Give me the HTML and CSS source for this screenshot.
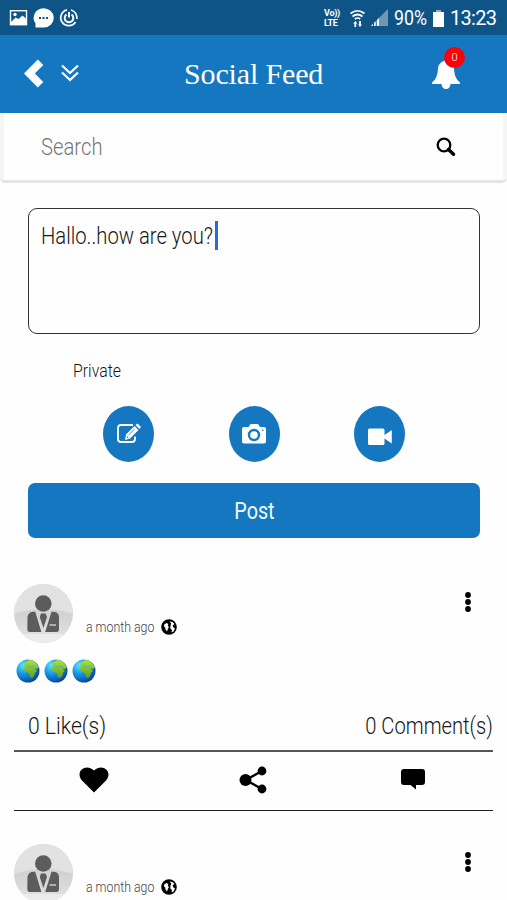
FILE: index.html
```html
<!DOCTYPE html>
<html lang="en">
<head>
<meta charset="utf-8">
<meta name="viewport" content="width=device-width">
<title>Social Feed</title>
<link rel="stylesheet" href="styles.css">
</head>
<body>
<svg class="defs" width="0" height="0" aria-hidden="true">
  <defs>
    <linearGradient id="disc" x1="0" y1="0" x2="0" y2="1"><stop offset="0" stop-color="#d6d6d6"/><stop offset=".5" stop-color="#d2d2d2"/><stop offset="1" stop-color="#e4e4e4"/></linearGradient>
    <radialGradient id="sea" cx=".3" cy=".25" r=".85"><stop offset="0" stop-color="#5de4fa"/><stop offset=".45" stop-color="#1596e4"/><stop offset="1" stop-color="#053a9b"/></radialGradient>
    <linearGradient id="land" x1="0" y1="0" x2="0" y2="1"><stop offset="0" stop-color="#b5e32c"/><stop offset="1" stop-color="#5b9a25"/></linearGradient>
  </defs>
  <symbol id="avatar" viewBox="0 0 59 59">
    <circle cx="29.500" cy="29.500" r="29.500" fill="url(#disc)"/>
    <path d="M0 30A29.500 29.500 0 0 1 59 30Q30 20 0 30Z" fill="#e2e2e2"/>
    <path d="M8 50H51Q43 59 29.500 59T8 50Z" fill="#ececec"/>
    <circle cx="29.300" cy="19.500" r="8.300" fill="#5c5c5c"/>
    <path d="M13.500 33Q14 28.500 19 27.800H21.200L27.400 48H16Q13.300 48 13.300 45ZM37.500 27.800H40Q45 28.500 45 33V45Q45 48 42.500 48H31.200ZM27 29.500H31.500L33 33L29.400 44L25.800 33Z" fill="#5c5c5c"/>
    <path d="M35.500 41H42" stroke="#e8e8e8" stroke-width="1.200"/>
  </symbol>
  <symbol id="globe" viewBox="0 0 16 16">
    <circle cx="8" cy="8" r="7.800"/>
    <path d="M3.200 5.500L5.500 4L7.300 5L6.800 6.800L8 8.200L7 9.500L6 12.500L4.500 10.500L4.300 8.500L3 7.500ZM8.500 2.500L11.500 3L13.500 5L11.500 6.500L12.500 8.500L14 9.500L12.500 12.500L10.500 13.500L11 11L9.300 9.500L9.500 6.500L10.300 4.500Z" fill="#fff"/>
  </symbol>
  <symbol id="earth" viewBox="0 0 24 24">
    <circle cx="12" cy="12" r="11.500" fill="url(#sea)"/>
    <path d="M8 5Q9.500 2.800 12 2L13.500 .8Q20 2 22.800 8.500L21 10L18.500 9L20.800 12L18.800 14L18.300 17L15.800 19.300L13.700 18L13 14L9 12.700L7.700 9.500L10 7.500Z" fill="url(#land)"/>
    <path d="M11 6.500Q14 8 18 6.800L19.500 8Q15 9 11 7.600Z" fill="#48b7c0"/>
  </symbol>
</svg>
<div class="phone">
  <div class="status">
    <svg class="notices" width="72" height="24" viewBox="0 0 72 24" fill="none" stroke="#fff">
      <rect x="2.500" y="4.700" width="16" height="14" stroke-width="1.400"/>
      <path d="M3 16L7.500 11.500L10.500 13L14.500 9.500L18.500 13V18.500H3Z" fill="#fff" stroke="none"/><circle cx="7" cy="8.500" r="1.700" fill="#fff" stroke="none"/>
      <path d="M35.200 2.200A9.700 9.200 0 1 1 36 21.500H27.500V17.500A9.700 9.700 0 0 1 35.200 2.200Z" fill="#fff" stroke="none"/>
      <path d="M31 12H33M34.500 12H36.500M38 12H40" stroke="#0e5487" stroke-width="1.800"/>
      <path d="M59 3.900A8 8 0 1 0 67.500 16M63 4A8 8 0 0 1 68.800 13" stroke-width="1.700"/>
      <path d="M58.500 8.500A4.300 4.300 0 1 0 63.500 8.500M61 6V11.500" stroke-width="2"/>
    </svg>
    <div class="signals">
      <div class="volte"><span>Vo))</span><span>LTE</span></div>
      <svg class="wifi" width="17" height="19" viewBox="0 0 17 19" fill="none" stroke="#fff" stroke-width="1.700"><path d="M1.500 4.500Q8.500 -1 15.500 4.500M3.500 7.500Q8.500 3.500 13.500 7.500M5.800 10Q8.500 8 11.200 10"/><path d="M4.200 14.500L6.300 12L8.400 14.500H7.200V18H5.400V14.500ZM9 15.500H10.100V12H11.900V15.500H13L11 18Z" fill="#fff" stroke="none"/></svg>
      <svg class="cell" width="17" height="17" viewBox="0 0 17 17"><path d="M0 17L17 0V17Z" fill="#6d98b7"/><path d="M0 17L8 9V17Z" fill="#fff"/><path d="M2.500 13V17M5.200 10V17" stroke="#0e5487" stroke-width="1"/></svg>
      <span class="percent">90%</span>
      <svg class="battery" width="11" height="17" viewBox="0 0 11 17"><path d="M3 0H8V2H3Z" fill="#8fb0c8"/><path d="M0 2H11V17H0Z" fill="#fff"/></svg>
      <span class="clock">13:23</span>
    </div>
  </div>
  <header class="header">
    <div class="nav">
      <svg width="20" height="29" viewBox="0 0 20 29"><path d="M13.800 .5L19.300 6L10.800 14.500L19.300 23L13.800 28.500L0 14.500Z" fill="#fff"/></svg>
      <svg width="18" height="18" viewBox="0 0 18 18" fill="none" stroke="#fff" stroke-width="2.200"><path d="M1 1.500L9 9L17 1.500M1 8.500L9 16L17 8.500"/></svg>
    </div>
    <h1>Social Feed</h1>
    <div class="bell">
      <svg width="30" height="31" viewBox="0 0 30 31"><path d="M13 2Q15 -.5 17 2Q22.500 3.500 23 9.500C23.500 17 25 20 29 23.500V25H19.500Q19 30 15 30T10.500 25H1V23.500C5 20 6.500 17 7 9.500Q7.500 3.500 13 2Z" fill="#fff"/></svg>
      <span class="badge">0</span>
    </div>
  </header>
  <div class="search">
    <div class="search-inner"><span class="narrow">Search</span>
      <svg width="20" height="20" viewBox="0 0 20 20" fill="none" stroke="#000"><circle cx="8" cy="8" r="6.300" stroke-width="2.300"/><path d="M12.500 12.500L17.500 17.200" stroke-width="3.500" stroke-linecap="round"/></svg>
    </div>
  </div>
  <section class="compose">
    <div class="box"><span class="draft narrow">Hallo..how are you?</span><i class="caret"></i></div>
    <div class="private"><span class="narrow">Private</span></div>
    <div class="attach">
      <div class="round"><svg width="26" height="24" viewBox="0 0 26 24" fill="none" stroke="#fff"><path d="M17 3H5Q2 3 2 6V17Q2 20 5 20H16Q19 20 19 17V14.500" stroke-width="1.800"/><path d="M9 18L10 12.500L18.500 4L22.500 8L14 16.500Z" fill="#fff" stroke="none"/><path d="M19.500 3L21.500 1.500L25 5L23.500 7Z" fill="#fff" stroke="none"/><path d="M12.500 13L18.500 7.200" stroke="#1677c1" stroke-width=".8"/><circle cx="11.500" cy="15.300" r=".8" fill="#1677c1" stroke="none"/></svg></div>
      <div class="round"><svg width="26" height="24" viewBox="0 0 26 24"><path d="M3 5H7.500L9 2.500Q9.500 2 10.500 2H16Q17 2 17.500 2.500L19 5H23Q25 5 25 7V19.500Q25 21.500 23 21.500H3Q1 21.500 1 19.500V7Q1 5 3 5Z" fill="#fff"/><circle cx="13" cy="13" r="5" fill="#fff" stroke="#1677c1" stroke-width="2.400"/><circle cx="21.800" cy="8.300" r=".8" fill="#1677c1"/></svg></div>
      <div class="round video"><svg width="26" height="18" viewBox="0 0 26 18"><path d="M2.500 .5H16Q17.500 .5 17.500 2V7L24.800 2V15.500L17.500 10.500V15.500Q17.500 17 16 17H2.500Q1 17 1 15.500V2Q1 .5 2.500 .5Z" fill="#fff"/></svg></div>
    </div>
    <div class="post-button"><span>Post</span></div>
  </section>
  <article class="post">
    <div class="author">
      <svg class="avatar" width="59" height="59"><use href="#avatar"/></svg>
      <span class="time narrow">a month ago</span>
      <svg class="world" width="16" height="16"><use href="#globe"/></svg>
      <svg class="dots" width="6" height="20" viewBox="0 0 6 20"><circle cx="3" cy="3" r="2.900"/><circle cx="3" cy="10" r="2.900"/><circle cx="3" cy="17" r="2.900"/></svg>
    </div>
    <div class="message">
      <svg width="24" height="24"><use href="#earth"/></svg><svg width="24" height="24"><use href="#earth"/></svg><svg width="24" height="24"><use href="#earth"/></svg>
    </div>
    <div class="counts"><span class="likes narrow">0 Like(s)</span><span class="comments">0 Comment(s)</span></div>
    <div class="actions">
      <svg width="30" height="26" viewBox="0 0 30 26"><path d="M15 25.500L2.500 13C-4 4 7-4 15 3.500C23-4 34 4 27.500 13Z"/></svg>
      <svg width="28" height="28" viewBox="0 0 28 28"><path d="M6.500 14L23 5M6.500 14L23 23" stroke="#000" stroke-width="2.400"/><circle cx="6.500" cy="14" r="6"/><circle cx="23" cy="5" r="4.400"/><circle cx="23" cy="23" r="4.400"/></svg>
      <svg width="24" height="21" viewBox="0 0 24 21"><path d="M3 0H21Q24 0 24 3V13Q24 16 21 16H15V20.500L9.500 16H3Q0 16 0 13V3Q0 0 3 0Z"/></svg>
    </div>
  </article>
  <article class="post">
    <div class="author">
      <svg class="avatar" width="59" height="59"><use href="#avatar"/></svg>
      <span class="time narrow">a month ago</span>
      <svg class="world" width="16" height="16"><use href="#globe"/></svg>
      <svg class="dots" width="6" height="20" viewBox="0 0 6 20"><circle cx="3" cy="3" r="2.900"/><circle cx="3" cy="10" r="2.900"/><circle cx="3" cy="17" r="2.900"/></svg>
    </div>
  </article>
</div>
</body>
</html>
```
FILE: styles.css
```css
* { box-sizing: border-box; }
html, body { margin: 0; height: 900px; overflow: hidden; }
body { background: #fefefe; color: #171717; font-family: Roboto, "Liberation Sans", sans-serif; font-weight: 300; }
svg { display: block; flex: none; }
span { white-space: nowrap; }
.defs { position: absolute; }
.phone { width: 507px; height: 900px; overflow: hidden; }
.narrow { transform: scaleX(.88); transform-origin: left center; }

.status { height: 35px; background: #0e5487; color: #fff; display: flex; justify-content: space-between; padding: 0 11px 0 8px; font-weight: 400; }
.notices { margin-top: 6px; }
.signals { display: flex; align-items: flex-start; }
.volte { display: flex; flex-direction: column; font-size: 9px; line-height: 10px; font-weight: 700; margin: 8px 7px 0 0; width: 18px; letter-spacing: -.3px; }
.wifi { margin: 9px 5px 0 0; }
.cell { margin: 9px 6px 0 0; }
.percent { font-size: 20px; line-height: 37px; width: 38px; transform: scaleX(.89); transform-origin: left center; }
.battery { margin: 10px 6px 0 1px; }
.clock { font-size: 20px; line-height: 37px; letter-spacing: -.7px; width: 46px; }

.header { height: 78px; background: #1677c1; color: #fff; display: grid; grid-template-columns: 184px 1fr 76px; align-items: center; }
.nav { display: flex; align-items: center; gap: 17px; padding-left: 24px; margin-top: -2px; }
h1 { margin: 0; font: 400 30px/34px "Liberation Serif", serif; letter-spacing: -.15px; }
.bell { position: relative; align-self: start; margin-top: 24px; }
.badge { position: absolute; left: 13px; top: -12px; width: 21px; height: 21px; border-radius: 50%; background: #fe0009; font-size: 11px; line-height: 21px; text-align: center; }

.search { height: 70px; padding: 0 4px; background: #f5f5f5; border-bottom: 3px solid #e5e5e5; border-radius: 0 0 5px 5px; }
.search-inner { height: 67px; background: #fefefe; display: flex; align-items: center; justify-content: space-between; padding: 1px 47px 0 37px; color: #777; font-size: 23px; }

.compose { padding: 25px 27px 0 28px; }
.box { height: 126px; border: 1.500px solid #333; border-radius: 9px; padding: 12px 12px; display: flex; align-items: flex-start; font-size: 23px; line-height: 32px; }
.draft { width: 174px; }
.caret { width: 3px; height: 29px; background: #2869de; }
.private { height: 72px; padding: 25px 0 0 45px; font-size: 18px; line-height: 24px; }
.private span { display: inline-block; }
.attach { display: flex; justify-content: space-between; padding: 0 75px; height: 77px; }
.round { width: 51px; height: 56px; border-radius: 50%; background: #1677c1; display: flex; align-items: center; justify-content: center; }
.video { padding-top: 5px; }
.post-button { height: 55px; border-radius: 7px; background: #1677c1; color: #f0faff; display: flex; align-items: center; justify-content: center; padding-top: 1px; font-size: 23px; font-weight: 400; }
.post-button span { transform: scaleX(.86); }

.post { padding: 46px 14px 0; height: 272px; }
.post + .post { padding-top: 34px; }
.author { display: flex; height: 59px; }
.time { width: 69px; margin: 34px 6px 0 13px; font-size: 14px; line-height: 18px; color: #444; }
.world { margin-top: 35px; }
.dots { margin: 8px 22px 0 auto; }
.message { display: flex; gap: 4px; padding: 16px 0 0 2px; height: 55px; }
.counts { height: 52px; display: flex; justify-content: space-between; align-items: center; padding: 4px 0 0 14px; font-size: 24px; }
.comments { transform: scaleX(.84); transform-origin: right center; }
.actions { height: 61px; padding-bottom: 3px; border-top: 2px solid #555; border-bottom: 1.500px solid #222; display: grid; grid-template-columns: repeat(3, 1fr); justify-items: center; align-items: center; }
```
